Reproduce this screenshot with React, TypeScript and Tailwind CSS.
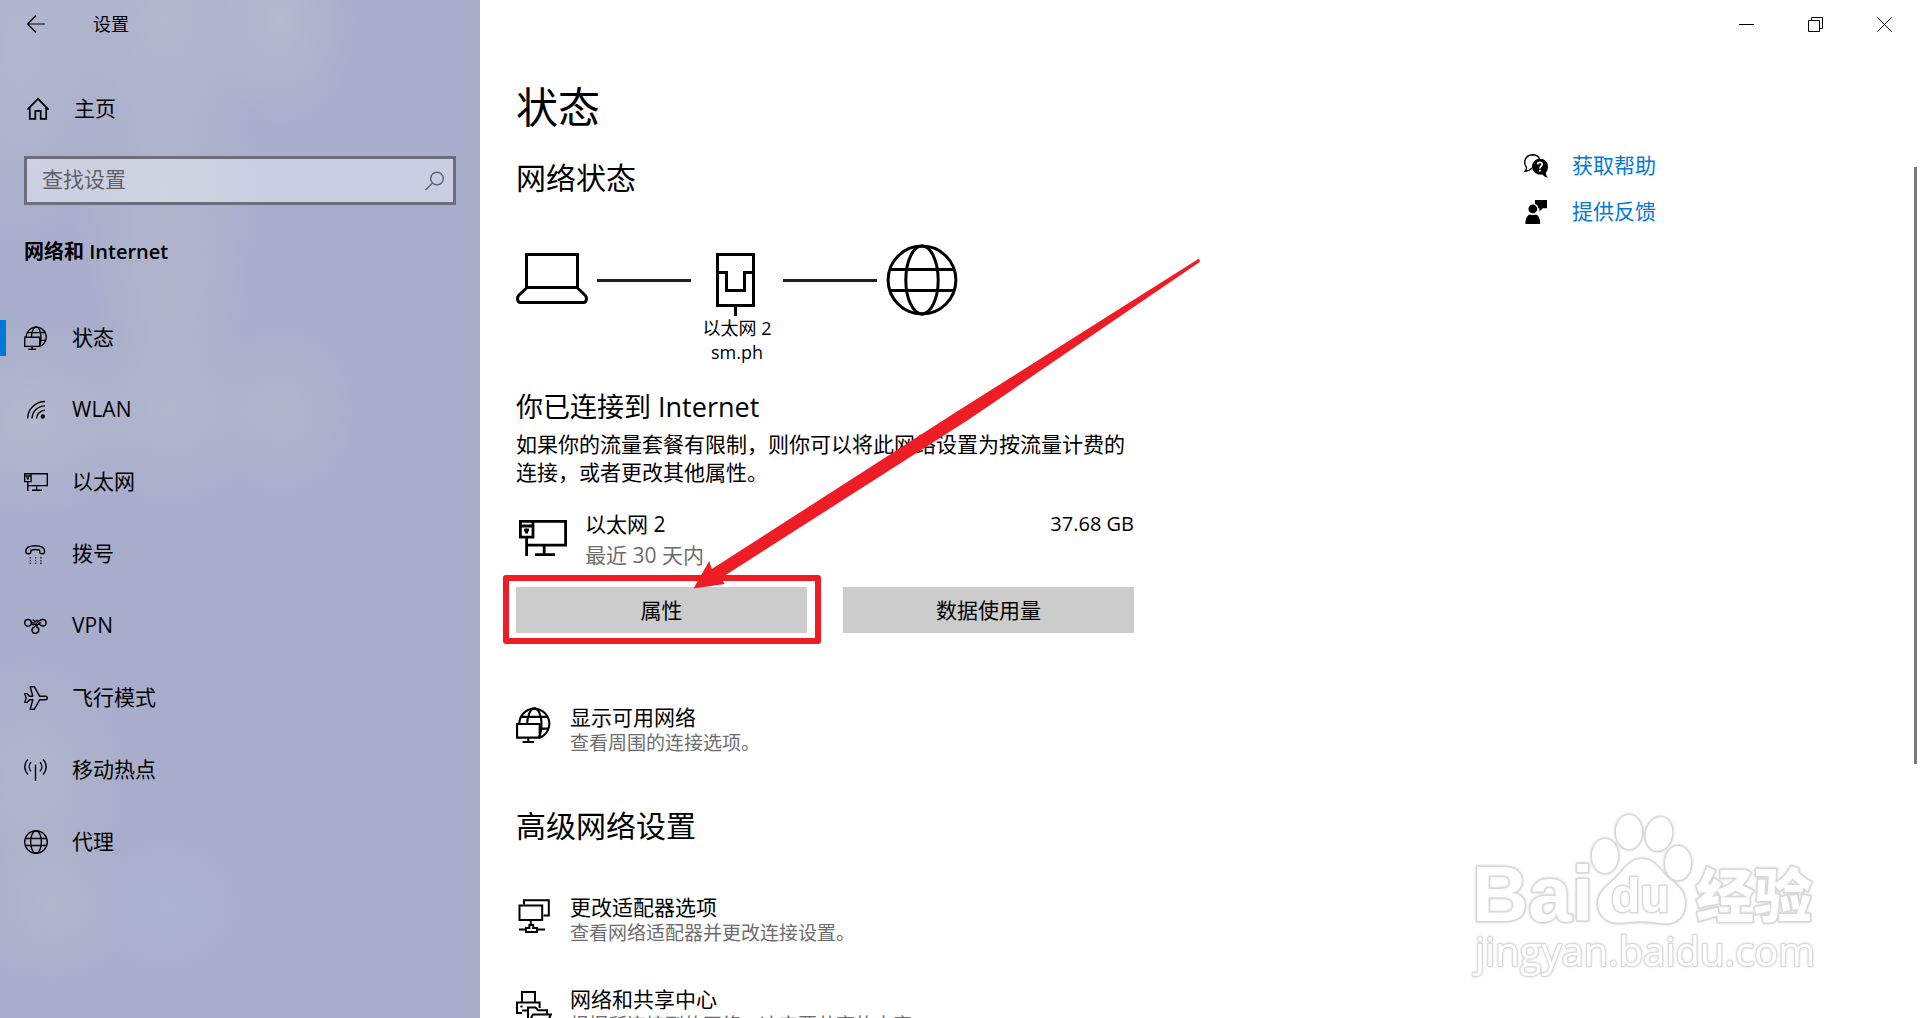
import React from 'react';

type IconProps = { className?: string; weight?: number };

const stroke = { fill: 'none', stroke: 'currentColor', strokeWidth: 1.4 };

function StatusIcon({ className = 'size-6' }: IconProps) {
  return (
    <svg viewBox="0 0 24 24" className={className} {...stroke} aria-hidden="true">
      <path d="M2.2 11.2A10 10 0 1 1 16.4 20.2" />
      <path d="M3.4 6.6H21.2M15.8 14.4H21.6" />
      <path d="M7.4 11.2C7.6 6.5 9.4 .9 12.2 .9C15 .9 17 6 17 10.8C17 14.6 16.6 17.6 15.4 20" />
      <path d="M.7 11.3H15.8V20.4H.7ZM8.2 20.4V23.3M4.4 23.3H12" />
    </svg>
  );
}

function WlanIcon() {
  return (
    <svg viewBox="0 0 24 24" className="size-6" {...stroke} aria-hidden="true">
      <path d="M3.6 20.6A17.3 17.3 0 0 1 21 3.5M8 20.6A13 13 0 0 1 21 7.9M12.5 20.6A8.6 8.6 0 0 1 21 12.3" />
      <circle cx="18.8" cy="18.5" r="2.2" fill="currentColor" stroke="none" />
    </svg>
  );
}

function EthernetIcon({ className = 'w-6 h-[18px]' }: IconProps) {
  return (
    <svg viewBox="0 0 24 18" className={className} {...stroke} aria-hidden="true">
      <path d="M7 .7H23.3V12.6H4.2M7 .7H.7V8.6H7ZM.7 3H7M3.8 8.6V18M12.6 12.6V17.3M8 17.3H18" />
      <path d="M3.8 6.8V4.4M2.6 5H5" />
    </svg>
  );
}

function DialIcon() {
  return (
    <svg viewBox="0 0 24 24" className="size-6" {...stroke} aria-hidden="true">
      <path d="M1.8 9.2C1.8 5.4 6 3.7 11.4 3.7S20.6 5.4 20.6 9.2C20.6 11.4 20 11.8 18.2 11.8C16.2 11.8 15.7 11.2 15.7 9.4V8.2C13.4 7.4 9.2 7.4 6.9 8.2V9.4C6.9 11.2 6.4 11.8 4.4 11.8C2.4 11.8 1.8 11.4 1.8 9.2Z" />
      <path d="M5.7 15.8H17.6M5.7 18.6H17.6M5.7 21.2H17.6" strokeDasharray="1.2 4.1" />
    </svg>
  );
}

function VpnIcon() {
  return (
    <svg viewBox="0 0 24 24" className="size-6" {...stroke} aria-hidden="true">
      <circle cx="4" cy="8.8" r="3.3" />
      <path d="M6.2 6.4C7.4 8.2 8.4 9.6 10.6 9.2M8.8 5.6L11.2 8L13.6 5.8" />
      <path d="M7.3 8.8C8 11.6 11 11.2 12.6 9.4C14.4 7.2 15.8 5.5 18.8 5.5C23.2 5.5 23.4 12 18.8 12C17 12 15.8 11 14.8 9.6" />
      <path d="M17.2 8.6C14.4 9 13 11 12.8 13C16 14.4 15.2 19.4 11.4 19.4C7.6 19.4 6.8 14.6 10 13.2C11.4 12.4 12.4 11 13 10" />
    </svg>
  );
}

function PlaneIcon() {
  return (
    <svg viewBox="0 0 24 24" className="size-6" {...stroke} strokeLinejoin="round" aria-hidden="true">
      <path d="M6.2 .7H10.3L15.6 10.2H21.4C22.8 10.2 23.4 11 23.4 12S22.8 13.8 21.4 13.8H15.6L10.3 23.3H6.2L8.8 13.8H5.4L3.2 16.4H.8L2.1 12L.8 7.6H3.2L5.4 10.2H8.8Z" />
    </svg>
  );
}

function HotspotIcon() {
  return (
    <svg viewBox="0 0 24 24" className="size-6" {...stroke} aria-hidden="true">
      <path d="M11.5 6.5V23M4 1.2C-.2 5.6-.2 12 4 16.4M7 4.2C4.6 6.8 4.6 10.6 7 13.4M19 1.2C23.2 5.6 23.2 12 19 16.4M16 4.2C18.4 6.8 18.4 10.6 16 13.4" />
    </svg>
  );
}

function GlobeIcon({ className = 'size-6', weight = 1.4 }: IconProps) {
  return (
    <svg viewBox="0 0 24 24" className={className} {...stroke} strokeWidth={weight} aria-hidden="true">
      <circle cx="12" cy="12" r="11.3" />
      <ellipse cx="12" cy="12" rx="5.4" ry="11.3" />
      <path d="M1.2 8.5H22.8M1.2 15.5H22.8" />
    </svg>
  );
}

function AdapterIcon() {
  return (
    <svg viewBox="0 0 36 36" className="size-9" {...stroke} strokeWidth={2} aria-hidden="true">
      <path d="M8 7.5V3.2H32.8V18.6H27.6" />
      <path d="M3.5 8.6H26.2V22.9H3.5ZM14.8 22.9V28M3 32.4H10M20 32.4H29" />
      <path d="M10 31H13.4V28H17.2V31H21V35H10Z" />
    </svg>
  );
}

function SharingIcon() {
  return (
    <svg viewBox="0 0 36 36" className="size-9" {...stroke} strokeWidth={2} aria-hidden="true">
      <path d="M6 13V3H19V13M6 24H1V13.4H23.6V19" />
      <path d="M4.4 17.4H6.6M6 21.4H12" />
      <path d="M12 34V18.6H19.6L22 21.2H31V25.4M12.4 34L17 25.4H35L31 34Z" />
    </svg>
  );
}

const navItems = [
  { label: '状态', icon: <StatusIcon />, active: true },
  { label: 'WLAN', icon: <WlanIcon /> },
  { label: '以太网', icon: <EthernetIcon /> },
  { label: '拨号', icon: <DialIcon /> },
  { label: 'VPN', icon: <VpnIcon /> },
  { label: '飞行模式', icon: <PlaneIcon /> },
  { label: '移动热点', icon: <HotspotIcon /> },
  { label: '代理', icon: <GlobeIcon /> },
];

function Sidebar() {
  return (
    <aside className="w-[480px] shrink-0 bg-[#a8adcb] bg-[radial-gradient(ellipse_80px_110px_at_280px_20px,#b4bacf,#a8adcb00),radial-gradient(ellipse_120px_140px_at_165px_20px,#b3b9ce,#a8adcb00),radial-gradient(ellipse_110px_200px_at_20px_50px,#b2b8cf,#a8adcb00),radial-gradient(ellipse_100px_160px_at_165px_190px,#b1b6cd,#a8adcb00),radial-gradient(ellipse_80px_120px_at_170px_300px,#b1b6cd,#a8adcb00),radial-gradient(ellipse_80px_90px_at_280px_410px,#b1b6cd,#a8adcb00),radial-gradient(ellipse_100px_100px_at_170px_410px,#b1b7cd,#a8adcb00),radial-gradient(ellipse_120px_100px_at_30px_420px,#b3b9ce,#a8adcb00),radial-gradient(ellipse_100px_130px_at_30px_780px,#b0b6ce,#a8adcb00),radial-gradient(ellipse_90px_80px_at_50px_905px,#b1b7cd,#a8adcb00),radial-gradient(ellipse_80px_70px_at_165px_905px,#abb3d1,#a8adcb00)]">
      <div className="flex h-12 items-center">
        <button type="button" aria-label="返回" className="ml-6 w-[69px]">
          <svg viewBox="0 0 24 24" className="size-6" {...stroke} strokeWidth={1.2} aria-hidden="true">
            <path d="M3.5 12H21M12 3.5L3.5 12L12 20.5" />
          </svg>
        </button>
        <span className="text-[18px]">设置</span>
      </div>

      <a href="#home" className="mt-[37px] flex h-12 items-center gap-6 pl-[26px]">
        <svg viewBox="0 0 24 24" className="size-6" {...stroke} strokeWidth={1.7} aria-hidden="true">
          <path d="M1.4 12.6L12 1.8L22.6 12.6M3.8 10.6V21.8H9.3V13.8H14.7V21.8H20.2V10.6" />
        </svg>
        主页
      </a>

      <div className="relative mx-6 mt-[23px]">
        <input
          type="search"
          aria-label="查找设置"
          placeholder="查找设置"
          className="h-[49px] w-full border-3 border-[#6b6e7b] bg-white/40 pb-[3px] pl-[15px] outline-none placeholder:text-[#5f6068]"
        />
        <svg viewBox="0 0 24 24" className="absolute top-[13px] right-2.5 size-6 text-[#5f6068]" {...stroke} aria-hidden="true">
          <circle cx="15" cy="9.5" r="6.3" />
          <path d="M10.5 14L3.5 21" />
        </svg>
      </div>

      <h2 className="mt-8 px-6 text-[20px] leading-[30px] font-semibold">网络和 Internet</h2>

      <nav className="mt-[35px]">
        {navItems.map((item) => (
          <a key={item.label} href="#nav" className="relative flex h-[72px] items-center gap-6 pl-6">
            {item.active && <span className="absolute left-0 h-9 w-1.5 bg-[#0078d7]" />}
            {item.icon}
            {item.label}
          </a>
        ))}
      </nav>
    </aside>
  );
}

function WindowControls() {
  return (
    <div className="absolute top-0 right-px flex h-12">
      <button type="button" aria-label="最小化" className="grid w-[69px] place-items-center">
        <svg viewBox="0 0 15 15" className="size-[15px]" {...stroke} strokeWidth={1}>
          <path d="M0 7.5H15" />
        </svg>
      </button>
      <button type="button" aria-label="还原" className="grid w-[69px] place-items-center">
        <svg viewBox="0 0 15 15" className="size-[15px]" {...stroke} strokeWidth={1}>
          <path d="M.5 3.5H11.5V14.5H.5ZM3.5 3.5V.5H14.5V11.5H11.5" />
        </svg>
      </button>
      <button type="button" aria-label="关闭" className="grid w-[69px] place-items-center">
        <svg viewBox="0 0 15 15" className="size-[15px]" {...stroke} strokeWidth={1}>
          <path d="M.3 .3L14.7 14.7M14.7 .3L.3 14.7" />
        </svg>
      </button>
    </div>
  );
}

function ConnectionDiagram() {
  return (
    <div className="mt-[46px] flex items-start gap-[9px]">
      <svg viewBox="0 0 72 72" className="size-[72px]" {...stroke} strokeWidth={3} aria-hidden="true">
        <path d="M10.5 43.5V10.5H61.5V43.5ZM10.5 44L2.6 51.5C1 53.5 1 58.5 4.5 58.5H67.5C71 58.5 71 53.5 69.4 51.5L61.5 44" />
      </svg>
      <span className="mt-[35px] h-[3px] w-[94px] bg-[#1f1f1f]" />
      <div className="flex w-[74px] flex-col items-center text-[18px] leading-6 whitespace-nowrap">
        <svg viewBox="0 0 72 72" className="size-[72px]" {...stroke} strokeWidth={3} aria-hidden="true">
          <path d="M16.5 10.5H52.5V61.5H16.5ZM16.5 28.5H25.5V46.5H43.5V28.5H52.5M34.5 61.5V72" />
        </svg>
        <span>以太网 2</span>
        <span>sm.ph</span>
      </div>
      <span className="mt-[35px] h-[3px] w-[94px] bg-[#1f1f1f]" />
      <GlobeIcon className="size-[72px]" weight={1} />
    </div>
  );
}

/* Red frame and arrow that point at the properties button */
function Callout() {
  return (
    <div className="pointer-events-none">
      <div className="absolute -top-3 -right-3.5 -bottom-[11px] -left-[13px] rounded-[3px] border-6 border-[#ee1c25]" />
      <svg viewBox="0 0 508 332" className="absolute -top-[329px] left-[177px] h-[332px] w-[508px]" aria-hidden="true">
        <path
          d="M504.5 1.5L260 156L18.8 311L16.3 303L.5 330.5L31.8 326L28 320L275 162L506 4.5C508 2.5 506.5 .5 504.5 1.5Z"
          fill="#ee1c25"
        />
      </svg>
    </div>
  );
}

type RowProps = { icon: React.ReactNode; title: string; detail: string };

function SettingRow({ icon, title, detail }: RowProps) {
  return (
    <a href="#setting" className="flex gap-[18px] leading-[26px]">
      <span className="mt-[3px]">{icon}</span>
      <span className="flex flex-col whitespace-nowrap">
        <span>{title}</span>
        <span className="text-[19px] text-[#6d6d6d]">{detail}</span>
      </span>
    </a>
  );
}

function HelpLinks() {
  return (
    <div className="mt-[143px] flex w-[396px] shrink-0 flex-col text-[#0078d7]">
      <a href="#help" className="flex h-[46px] items-center gap-6">
        <svg viewBox="0 0 24 24" className="size-6 text-black" aria-hidden="true">
          <path
            d="M7.8 13.8C6.6 15.6 3.6 17 1 17.2C2.2 16.2 2.6 14.8 2.4 13.2C-1 9 .8 1 8.4 .8C12.6 .8 15 3.2 15.8 5.4"
            fill="none"
            stroke="currentColor"
            strokeWidth="1.4"
          />
          <path
            d="M16 4.8C20.6 4.8 24 8.2 24 12.4C24 15 23.2 17 21.8 18.6C21.8 20.6 22.6 22.2 24 23.6C21.4 23.4 19.4 22.2 18.4 20.6C12.8 21.6 8 17.8 8 12.6C8 8.2 11.6 4.8 16 4.8Z"
            fill="currentColor"
          />
          <path d="M13.6 10.4C13.8 7.6 18.4 7.8 18.2 10.4C18 12.2 15.9 12.2 15.9 14.4M15.9 15.8V17.6" fill="none" stroke="white" strokeWidth="1.7" />
        </svg>
        获取帮助
      </a>
      <a href="#feedback" className="flex h-[46px] items-center gap-6">
        <svg viewBox="0 0 24 24" className="size-6 text-black" fill="currentColor" aria-hidden="true">
          <path d="M11 0H23V8.2H18.8L15.4 11.6V8.2H14.4C14 5.6 12.8 4.4 11 4Z" />
          <circle cx="8.8" cy="9" r="4.4" />
          <path d="M1.4 24C1.4 18 3.6 14.8 6.2 14.4C8 15.2 9.8 15.2 11.6 14.4C14.4 14.8 16.2 18 16.2 24Z" />
        </svg>
        提供反馈
      </a>
    </div>
  );
}

function Watermark() {
  return (
    <svg
      viewBox="0 0 360 180"
      className="pointer-events-none absolute right-[90px] bottom-[28px] h-[180px] w-[360px] fill-white stroke-[#d9d9d9] drop-shadow-[0_0_1px_#d4d4d4] [paint-order:stroke]"
      strokeWidth="3"
      strokeLinejoin="round"
      aria-hidden="true"
    >
      <text x="2" y="111" className="font-['Liberation_Sans'] text-[78px] font-bold">Bai</text>
      <ellipse cx="135" cy="46" rx="13" ry="17" />
      <ellipse cx="159" cy="22" rx="13" ry="17" />
      <ellipse cx="189" cy="24" rx="13" ry="17" transform="rotate(12 189 24)" />
      <ellipse cx="208" cy="53" rx="13" ry="17" />
      <path d="M172 49C184 49 190 60 198 68C208 76 216 82 215 95C214 110 202 115 190 113C178 111 168 111 158 112C142 115 129 110 128 94C128 82 138 76 146 68C154 60 160 49 172 49Z" />
      <text x="141" y="102" className="font-['Liberation_Sans'] text-[48px] font-bold">du</text>
      <text x="226" y="107" className="font-['Noto_Sans_CJK_SC'] text-[58px] font-black">经验</text>
      <text x="5" y="156" className="font-['Open_Sans'] text-[40px]" strokeWidth="2">jingyan.baidu.com</text>
    </svg>
  );
}

export default function App() {
  return (
    <div className="relative flex h-screen overflow-hidden bg-white font-['Open_Sans','Noto_Sans_CJK_SC',sans-serif] text-[21px] text-black">
      <Sidebar />
      <main className="flex flex-1 justify-between pl-9">
        <div className="w-[618px] shrink-0 pt-[77px]">
          <h1 className="text-[42px] leading-[60px]">状态</h1>
          <h2 className="mt-[21px] text-[30px] leading-10">网络状态</h2>
          <ConnectionDiagram />

          <h3 className="mt-[25px] text-[27px] leading-9">你已连接到 Internet</h3>
          <p className="mt-[5px] leading-7">
            如果你的流量套餐有限制，则你可以将此网络设置为按流量计费的连接，或者更改其他属性。
          </p>

          <div className="mt-6 flex leading-7">
            <EthernetIcon className="mt-2.5 ml-[3px] h-9 w-12" />
            <div className="ml-[18px]">
              <div>以太网 2</div>
              <div className="mt-[3px] text-[#6d6d6d]">最近 30 天内</div>
            </div>
            <span className="ml-auto text-[20px]">37.68 GB</span>
          </div>

          <div className="mt-[18px] grid grid-cols-2 gap-9">
            <div className="relative">
              <button type="button" className="h-[46px] w-full bg-[#ccc] pt-0.5">属性</button>
              <Callout />
            </div>
            <button type="button" className="h-[46px] bg-[#ccc] pt-0.5">数据使用量</button>
          </div>

          <div className="mt-[71px]">
            <SettingRow icon={<StatusIcon className="size-9" />} title="显示可用网络" detail="查看周围的连接选项。" />
          </div>

          <h2 className="mt-[50px] text-[30px] leading-10">高级网络设置</h2>
          <div className="mt-12 flex flex-col gap-10">
            <SettingRow icon={<AdapterIcon />} title="更改适配器选项" detail="查看网络适配器并更改连接设置。" />
            <SettingRow icon={<SharingIcon />} title="网络和共享中心" detail="根据所连接到的网络，决定要共享的内容。" />
          </div>
        </div>
        <HelpLinks />
      </main>
      <WindowControls />
      <div className="absolute top-[167px] right-[3px] h-[597px] w-[3px] bg-[#7a7a7a]" />
      <Watermark />
    </div>
  );
}
